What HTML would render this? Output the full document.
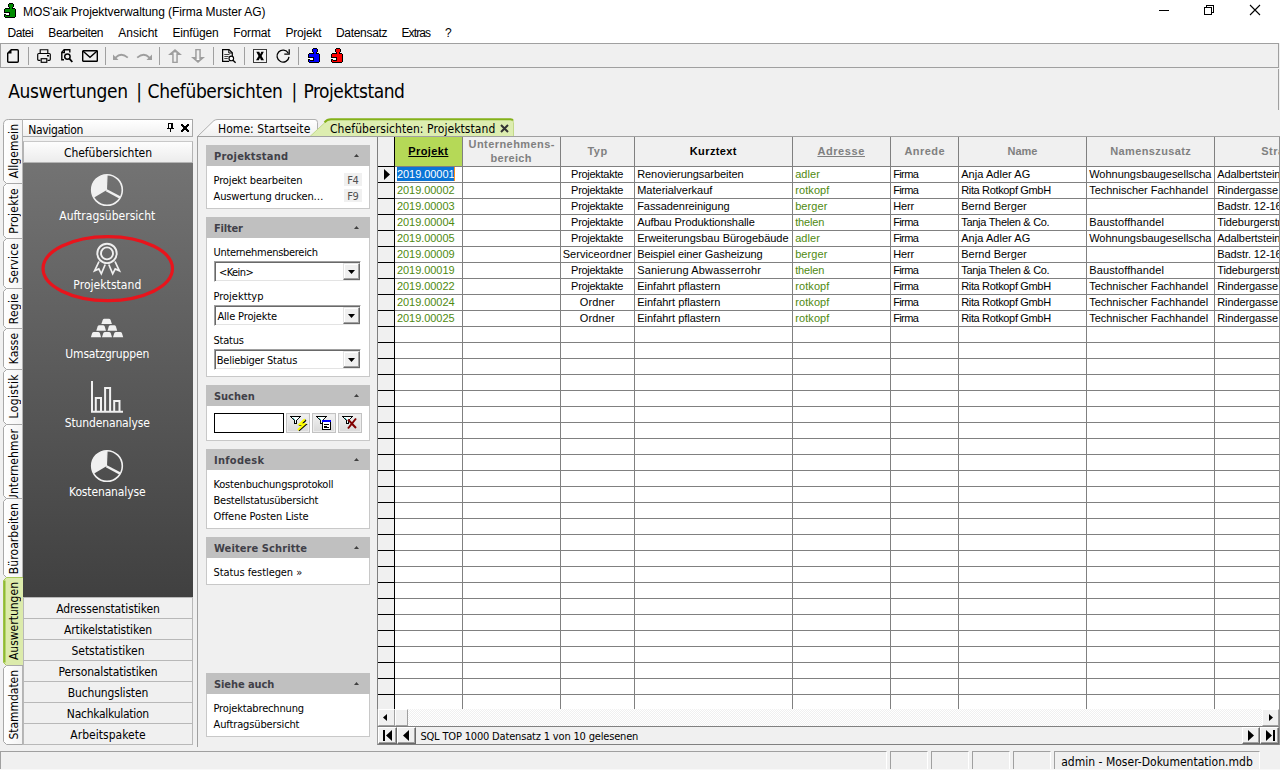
<!DOCTYPE html><html lang="de"><head><meta charset="utf-8"><title>MOS'aik Projektverwaltung</title><style>
*{box-sizing:border-box;margin:0;padding:0}
html,body{width:1280px;height:770px;overflow:hidden;background:#f0f0f0}
body{position:relative;font-family:"DejaVu Sans Condensed","Liberation Sans",sans-serif;font-size:12px;color:#000}
.a{position:absolute;white-space:nowrap}
.t{position:absolute;white-space:nowrap;line-height:14px}
.seg{font-family:"Liberation Sans",sans-serif;font-size:12px}
.ar{font-family:"Liberation Sans",sans-serif;font-size:11px}
.c{text-align:center}
svg{position:absolute;overflow:visible}
.vt{position:absolute;left:3px;width:20px;}
.vt{overflow:hidden}
.vt span{position:absolute;left:3px;top:5px;white-space:nowrap;line-height:14px;font-size:12px;writing-mode:vertical-rl;transform:rotate(180deg)}
.nb{position:absolute;left:23px;width:170px;height:22px;border:1px solid #b4b4b4;border-top-color:#c8c8c8;background:linear-gradient(#fdfdfd,#ececec);text-align:center;line-height:19px;font-size:12px}
.ni{position:absolute;left:23px;width:170px;text-align:center;color:#fff;font-size:12px;line-height:14px}
.ph{position:absolute;left:206px;width:164px;height:21px;background:#c0c0c0;color:#404048;font-weight:bold;font-size:11px;line-height:21px;padding-left:8px;font-family:"DejaVu Sans Condensed","Liberation Sans",sans-serif}
.pb{position:absolute;left:206px;width:164px;background:#fff;border:1px solid #c8c8c8;border-top:none}
.pl{position:absolute;left:213px;font-size:11px;line-height:14px;white-space:nowrap;letter-spacing:-0.2px}
.fk{position:absolute;left:344px;width:18px;height:13px;background:#f0f0f0}
.cb{position:absolute;left:214px;width:147px;height:21px;background:#fff;border:1px solid #a0a0a0;border-right-color:#fff;border-bottom-color:#fff;box-shadow:inset 1px 1px 0 #696969,inset -1px -1px 0 #e3e3e3}
.cb i{position:absolute;left:128px;top:1px;width:17px;height:17px;background:#f0f0f0;border:1px solid #e3e3e3;border-right-color:#696969;border-bottom-color:#696969;box-shadow:inset -1px -1px 0 #a0a0a0,inset 1px 1px 0 #fff}
.cb i svg{left:4px;top:6px}
</style></head><body>
<div class="a" style="left:0px;top:0px;width:1280px;height:43px;background:#fff"></div>
<svg style="left:4px;top:3px" width="13" height="15" viewBox="0 0 13 15" shape-rendering="crispEdges"><path d="M5 0h4v1h-4zM4 1h1v1h-1zM9 1h1v1h-1zM4 2h1v1h-1zM9 2h1v1h-1zM4 3h1v1h-1zM9 3h1v1h-1zM5 4h1v1h-1zM8 4h1v1h-1zM1 5h5v1h-5zM8 5h3v1h-3zM0 6h1v1h-1zM11 6h1v1h-1zM0 7h1v1h-1zM11 7h1v1h-1zM0 8h1v1h-1zM11 8h1v1h-1zM0 9h6v1h-6zM11 9h1v1h-1zM5 10h1v1h-1zM11 10h1v1h-1zM0 11h2v1h-2zM5 11h1v1h-1zM11 11h1v1h-1zM0 12h1v1h-1zM2 12h4v1h-4zM11 12h1v1h-1zM0 13h1v1h-1zM11 13h1v1h-1zM1 14h10v1h-10z" fill="#000"/><path d="M5 1h4v1h-4zM5 2h4v1h-4zM5 3h4v1h-4zM6 4h2v1h-2zM6 5h2v1h-2zM1 6h10v1h-10zM1 7h10v1h-10zM1 8h10v1h-10zM6 9h5v1h-5zM6 10h5v1h-5zM6 11h5v1h-5zM1 12h1v1h-1zM6 12h5v1h-5zM1 13h10v1h-10z" fill="#008c00"/><path d="M0 10h5v1h-5zM2 11h3v1h-3z" fill="#fff"/></svg>
<div class="t seg" style="left:23px;top:5px;font-size:12px;letter-spacing:-0.076px;">MOS'aik Projektverwaltung (Firma Muster AG)</div>
<svg style="left:1150px;top:0" width="130" height="22" viewBox="0 0 130 22"><g stroke="#000" stroke-width="1" fill="none" shape-rendering="crispEdges"><path d="M9 10.5h10"/><path d="M54.500 7.500h7v7h-7z"/><path d="M56.500 7.500v-2h7v7h-2"/></g><path d="M100 5l10 10M110 5l-10 10" stroke="#000" stroke-width="1.1" fill="none"/></svg>
<div class="t seg" style="left:7.5px;top:26px;font-size:12px;letter-spacing:-0.454px;">Datei</div>
<div class="t seg" style="left:48.2px;top:26px;font-size:12px;letter-spacing:-0.305px;">Bearbeiten</div>
<div class="t seg" style="left:118.2px;top:26px;font-size:12px;letter-spacing:0.023px;">Ansicht</div>
<div class="t seg" style="left:172.5px;top:26px;font-size:12px;letter-spacing:-0.168px;">Einfügen</div>
<div class="t seg" style="left:233.2px;top:26px;font-size:12px;letter-spacing:-0.103px;">Format</div>
<div class="t seg" style="left:285.5px;top:26px;font-size:12px;letter-spacing:-0.227px;">Projekt</div>
<div class="t seg" style="left:336px;top:26px;font-size:12px;letter-spacing:-0.316px;">Datensatz</div>
<div class="t seg" style="left:401.5px;top:26px;font-size:12px;letter-spacing:-0.903px;">Extras</div>
<div class="t seg" style="left:445px;top:26px;font-size:12px;letter-spacing:-1.188px;">?</div>
<div class="a" style="left:0px;top:43px;width:1279px;height:25px;border:1px solid #a0a0a0;background:#f0f0f0"></div>
<div class="a" style="left:28px;top:47px;width:1px;height:18px;background:#a0a0a0"></div>
<div class="a" style="left:105px;top:47px;width:1px;height:18px;background:#a0a0a0"></div>
<div class="a" style="left:159px;top:47px;width:1px;height:18px;background:#a0a0a0"></div>
<div class="a" style="left:213px;top:47px;width:1px;height:18px;background:#a0a0a0"></div>
<div class="a" style="left:244px;top:47px;width:1px;height:18px;background:#a0a0a0"></div>
<div class="a" style="left:298px;top:47px;width:1px;height:18px;background:#a0a0a0"></div>
<svg style="left:7px;top:49px" width="12" height="14" viewBox="0 0 12 14" ><path d="M4.200 0.700H10.300Q11.300 0.700 11.300 1.700V12.300Q11.300 13.300 10.300 13.300H1.700Q0.700 13.300 0.700 12.300V4.200Z" stroke="#000" fill="none" stroke-width="1.400" stroke-linejoin="round"/><path d="M4.500 0.700V4.500H0.700Z" fill="#000"/></svg><svg style="left:37px;top:49px" width="14" height="14" viewBox="0 0 14 14" ><path d="M3.200 4.500V0.700H10.800V4.500" stroke="#000" fill="none" stroke-width="1.150"/><path d="M3.500 11.300H1.700Q0.700 11.300 0.700 10.300V5.500Q0.700 4.500 1.700 4.500H12.300Q13.300 4.500 13.300 5.500V10.300Q13.300 11.300 12.300 11.300H10.500" stroke="#000" fill="none" stroke-width="1.150"/><rect x="4.200" y="9.700" width="5.600" height="3.600" stroke="#000" fill="none" stroke-width="1.150"/><rect x="10" y="6" width="2" height="1.500" fill="#000"/></svg><svg style="left:61px;top:49px" width="12" height="14" viewBox="0 0 12 14" ><path d="M8.800 3.500V0.700H3.200L0.800 3.200V10.800H3" stroke="#000" fill="none" stroke-width="1.400"/><path d="M3.400 0.700V3.600H0.800" stroke="#000" fill="none" stroke-width="1.200"/><circle cx="6.400" cy="7.600" r="2.700" stroke="#000" fill="none" stroke-width="1.500"/><path d="M8.400 9.700L11.300 13" stroke="#000" fill="none" stroke-width="1.800"/></svg><svg style="left:82px;top:50px" width="16" height="12" viewBox="0 0 16 12" ><rect x="0.700" y="0.700" width="14.600" height="10.600" rx="0.600" stroke="#000" fill="none" stroke-width="1.400"/><path d="M0.900 1L8 7.200L15.100 1" stroke="#000" fill="none" stroke-width="1.400"/></svg><svg style="left:113px;top:52px" width="16" height="9" viewBox="0 0 16 9" ><path d="M0 2.500V8H5.500L3.600 6.100Q8.500 1.300 14.200 6.300L15.400 5.100Q8 -1.500 2.200 4.700Z" fill="#9e9e9e"/></svg><svg style="left:136px;top:52px" width="16" height="9" viewBox="0 0 16 9" ><path d="M16 2.500V8H10.500L12.400 6.100Q7.500 1.300 1.800 6.300L0.600 5.100Q8 -1.500 13.800 4.700Z" fill="#9e9e9e"/></svg><svg style="left:168px;top:49px" width="14" height="14" viewBox="0 0 14 14" ><path d="M7 0L14 6H9.800V14H4.200V6H0Z" fill="#9e9e9e"/><rect x="5.700" y="4" width="2.600" height="8.700" fill="#f0f0f0"/><path d="M5.700 4H8.300" stroke="#fff" stroke-width="1"/></svg><svg style="left:191px;top:49px" width="14" height="14" viewBox="0 0 14 14" ><path d="M7 14L14 8H9.800V0H4.200V8H0Z" fill="#9e9e9e"/><rect x="5.700" y="1.300" width="2.600" height="9" fill="#f0f0f0"/><path d="M5.700 10.500H8.300" stroke="#fff" stroke-width="1"/></svg><svg style="left:222px;top:49px" width="14" height="14" viewBox="0 0 14 14" ><path d="M7.200 12.300H0.600V0.600H7L10.300 3.800V7" stroke="#000" fill="none" stroke-width="1.200"/><path d="M6.800 0.800V4H10" stroke="#000" fill="none" stroke-width="1"/><path d="M2.300 5.500H7.500M2.300 7.500H6.500M2.300 9.500H5.800" stroke="#444" stroke-width="1" fill="none"/><circle cx="9.300" cy="9.400" r="2.300" fill="#fff" stroke="#000" stroke-width="1.100"/><path d="M11 11.200L13.600 13.800" stroke="#000" fill="none" stroke-width="1.300"/></svg><svg style="left:253px;top:49px" width="14" height="14" viewBox="0 0 14 14" ><rect x="0.500" y="0.500" width="13" height="13" fill="#f4f4f4" stroke="#3c3c3c" stroke-width="1"/><path d="M3.300 2.800H6.300L7.200 5.300L8.300 2.800H10.800L8.600 7L11 11.300H8L7 8.800L5.800 11.300H3L5.500 7Z" fill="#000"/></svg><svg style="left:276px;top:49px" width="15" height="14" viewBox="0 0 15 14" ><path d="M12.300 4.200A6 6 0 1 0 13 7.800" stroke="#000" fill="none" stroke-width="1.300"/><path d="M13.200 0.300V5.200H8.300" stroke="#000" fill="none" stroke-width="1.300"/></svg>
<svg style="left:308px;top:48px" width="13" height="15" viewBox="0 0 13 15" shape-rendering="crispEdges"><path d="M5 0h4v1h-4zM4 1h1v1h-1zM9 1h1v1h-1zM4 2h1v1h-1zM9 2h1v1h-1zM4 3h1v1h-1zM9 3h1v1h-1zM5 4h1v1h-1zM8 4h1v1h-1zM1 5h5v1h-5zM8 5h3v1h-3zM0 6h1v1h-1zM11 6h1v1h-1zM0 7h1v1h-1zM11 7h1v1h-1zM0 8h1v1h-1zM11 8h1v1h-1zM0 9h6v1h-6zM11 9h1v1h-1zM5 10h1v1h-1zM11 10h1v1h-1zM0 11h2v1h-2zM5 11h1v1h-1zM11 11h1v1h-1zM0 12h1v1h-1zM2 12h4v1h-4zM11 12h1v1h-1zM0 13h1v1h-1zM11 13h1v1h-1zM1 14h10v1h-10z" fill="#000"/><path d="M5 1h4v1h-4zM5 2h4v1h-4zM5 3h4v1h-4zM6 4h2v1h-2zM6 5h2v1h-2zM1 6h10v1h-10zM1 7h10v1h-10zM1 8h10v1h-10zM6 9h5v1h-5zM6 10h5v1h-5zM6 11h5v1h-5zM1 12h1v1h-1zM6 12h5v1h-5zM1 13h10v1h-10z" fill="#0000ff"/><path d="M0 10h5v1h-5zM2 11h3v1h-3z" fill="#fff"/></svg>
<svg style="left:331px;top:48px" width="13" height="15" viewBox="0 0 13 15" shape-rendering="crispEdges"><path d="M5 0h4v1h-4zM4 1h1v1h-1zM9 1h1v1h-1zM4 2h1v1h-1zM9 2h1v1h-1zM4 3h1v1h-1zM9 3h1v1h-1zM5 4h1v1h-1zM8 4h1v1h-1zM1 5h5v1h-5zM8 5h3v1h-3zM0 6h1v1h-1zM11 6h1v1h-1zM0 7h1v1h-1zM11 7h1v1h-1zM0 8h1v1h-1zM11 8h1v1h-1zM0 9h6v1h-6zM11 9h1v1h-1zM5 10h1v1h-1zM11 10h1v1h-1zM0 11h2v1h-2zM5 11h1v1h-1zM11 11h1v1h-1zM0 12h1v1h-1zM2 12h4v1h-4zM11 12h1v1h-1zM0 13h1v1h-1zM11 13h1v1h-1zM1 14h10v1h-10z" fill="#000"/><path d="M5 1h4v1h-4zM5 2h4v1h-4zM5 3h4v1h-4zM6 4h2v1h-2zM6 5h2v1h-2zM1 6h10v1h-10zM1 7h10v1h-10zM1 8h10v1h-10zM6 9h5v1h-5zM6 10h5v1h-5zM6 11h5v1h-5zM1 12h1v1h-1zM6 12h5v1h-5zM1 13h10v1h-10z" fill="#ff0000"/><path d="M0 10h5v1h-5zM2 11h3v1h-3z" fill="#fff"/></svg>
<div class="t" style="left:8.2px;top:80px;font-size:19px;letter-spacing:-0.341px;line-height:22px">Auswertungen</div>
<div class="t" style="left:136.3px;top:80px;font-size:19px;letter-spacing:-1.766px;line-height:22px">|</div>
<div class="t" style="left:147.6px;top:80px;font-size:19px;letter-spacing:-0.371px;line-height:22px">Chefübersichten</div>
<div class="t" style="left:291.5px;top:80px;font-size:19px;letter-spacing:-1.766px;line-height:22px">|</div>
<div class="t" style="left:303.5px;top:80px;font-size:19px;letter-spacing:-0.479px;line-height:22px">Projektstand</div>
<div class="a" style="left:1278px;top:69px;width:1px;height:41px;background:#a0a0a0"></div>
<svg style="left:0;top:0" width="24" height="750" viewBox="0 0 24 750"><defs><linearGradient id="vg" x1="0" y1="0" x2="1" y2="0"><stop offset="0" stop-color="#ffffff"/><stop offset="1" stop-color="#f3f3f3"/></linearGradient></defs><path d="M23 119.5L8.500 119.5Q3.500 119.5 3.500 124.5L3.500 180.5L6.500 183.5L23 183.5" fill="url(#vg)" stroke="#a8a8a8" stroke-width="1"/><path d="M23 183.5L6.500 183.5L3.500 186.5L3.500 235.5L6.500 238.5L23 238.5" fill="url(#vg)" stroke="#a8a8a8" stroke-width="1"/><path d="M23 238.5L6.500 238.5L3.500 241.5L3.500 285.5L6.500 288.5L23 288.5" fill="url(#vg)" stroke="#a8a8a8" stroke-width="1"/><path d="M23 288.5L6.500 288.5L3.500 291.5L3.500 325.5L6.500 328.5L23 328.5" fill="url(#vg)" stroke="#a8a8a8" stroke-width="1"/><path d="M23 328.5L6.500 328.5L3.500 331.5L3.500 366.5L6.500 369.5L23 369.5" fill="url(#vg)" stroke="#a8a8a8" stroke-width="1"/><path d="M23 369.5L6.500 369.5L3.500 372.5L3.500 421.5L6.500 424.5L23 424.5" fill="url(#vg)" stroke="#a8a8a8" stroke-width="1"/><path d="M23 424.5L6.500 424.5L3.500 427.5L3.500 495.5L6.500 498.5L23 498.5" fill="url(#vg)" stroke="#a8a8a8" stroke-width="1"/><path d="M23 498.5L6.500 498.5L3.500 501.5L3.500 574.5L6.500 577.5L23 577.5" fill="url(#vg)" stroke="#a8a8a8" stroke-width="1"/><path d="M23 577.5L6.500 577.5L3.500 580.5L3.500 662.5L6.500 665.5L23 665.5" fill="#dcebab" stroke="#a9c95a" stroke-width="1"/><path d="M4.500 580.5L4.500 662.5" stroke="#8fbb32" stroke-width="2" fill="none"/><path d="M23 665.5L6.500 665.5L3.500 668.5L3.500 741.5L6.500 744.5L23 744.5" fill="url(#vg)" stroke="#a8a8a8" stroke-width="1"/></svg>
<div class="vt" style="top:119px;height:64px;"><span style="letter-spacing:0.026px;left:4px">Allgemein</span></div>
<div class="vt" style="top:183px;height:55px;"><span style="letter-spacing:0.234px;left:4px">Projekte</span></div>
<div class="vt" style="top:238px;height:50px;"><span style="letter-spacing:0.099px;left:4px">Service</span></div>
<div class="vt" style="top:288px;height:40px;"><span style="letter-spacing:0.223px;left:4px">Regie</span></div>
<div class="vt" style="top:328px;height:41px;"><span style="letter-spacing:-0.048px;left:4px">Kasse</span></div>
<div class="vt" style="top:369px;height:55px;"><span style="letter-spacing:0.389px;left:4px">Logistik</span></div>
<div class="vt" style="top:424px;height:74px;"><span style="letter-spacing:0.122px;left:4px">Unternehmer</span></div>
<div class="vt" style="top:498px;height:79px;"><span style="letter-spacing:0.073px;left:4px">Büroarbeiten</span></div>
<div class="vt" style="top:577px;height:88px;"><span style="letter-spacing:0.006px;left:4px">Auswertungen</span></div>
<div class="vt" style="top:665px;height:79px;"><span style="letter-spacing:-0.049px;left:4px">Stammdaten</span></div>
<div class="a" style="left:22px;top:119px;width:171px;height:18px;border:1px solid #a8a8a8;background:linear-gradient(#fff,#f0f0f0)"></div>
<div class="t" style="left:28.3px;top:123px;font-size:12px;letter-spacing:-0.359px;">Navigation</div>
<svg style="left:167px;top:123px" width="7" height="9" viewBox="0 0 7 9" shape-rendering="crispEdges"><path d="M1 0h5v1h-5zM1 1h1v1h-1zM4 1h2v1h-2zM1 2h1v1h-1zM4 2h2v1h-2zM1 3h1v1h-1zM4 3h2v1h-2zM1 4h1v1h-1zM4 4h2v1h-2zM0 5h7v1h-7zM3 6h1v1h-1zM3 7h1v1h-1zM3 8h1v1h-1z" fill="#000"/></svg>
<svg style="left:181px;top:124px" width="8" height="8" viewBox="0 0 8 8" shape-rendering="crispEdges"><path d="M0 0h2v1h-2zM6 0h2v1h-2zM0 1h3v1h-3zM5 1h3v1h-3zM1 2h6v1h-6zM2 3h4v1h-4zM2 4h4v1h-4zM1 5h6v1h-6zM0 6h3v1h-3zM5 6h3v1h-3zM0 7h2v1h-2zM6 7h2v1h-2z" fill="#000"/></svg>
<div class="nb" style="top:141px;"></div>
<div class="t" style="left:64px;top:146px;font-size:12px;letter-spacing:-0.052px;">Chefübersichten</div>
<div class="a" style="left:23px;top:163px;width:170px;height:435px;background:linear-gradient(#737373,#404040)"></div>
<div class="t" style="left:59.3px;top:209px;font-size:12px;letter-spacing:0.0px;color:#fff">Auftragsübersicht</div>
<div class="t" style="left:73.3px;top:278px;font-size:12px;letter-spacing:0.057px;color:#fff">Projektstand</div>
<div class="t" style="left:65.3px;top:347px;font-size:12px;letter-spacing:-0.159px;color:#fff">Umsatzgruppen</div>
<div class="t" style="left:64.8px;top:416px;font-size:12px;letter-spacing:-0.143px;color:#fff">Stundenanalyse</div>
<div class="t" style="left:69.05px;top:485px;font-size:12px;letter-spacing:-0.139px;color:#fff">Kostenanalyse</div>
<svg style="left:0;top:0" width="200" height="600" viewBox="0 0 200 600"><circle cx="107" cy="190" r="15.3" fill="none" stroke="#f0f0f0" stroke-width="1.600"/><path d="M106.40 190.20L107.00 174.70A15.3 15.3 0 0 0 93.75 197.65Z" fill="#f0f0f0"/><path d="M106.40 190.20L120.25 197.65" stroke="#f0f0f0" stroke-width="2.400" fill="none"/><path d="M106.40 190.20L107.00 174.70" stroke="#f0f0f0" stroke-width="1.200" fill="none"/><circle cx="107" cy="466" r="15.3" fill="none" stroke="#f0f0f0" stroke-width="1.600"/><path d="M106.40 466.20L107.00 450.70A15.3 15.3 0 0 0 93.75 473.65Z" fill="#f0f0f0"/><path d="M106.40 466.20L120.25 473.65" stroke="#f0f0f0" stroke-width="2.400" fill="none"/><path d="M106.40 466.20L107.00 450.70" stroke="#f0f0f0" stroke-width="1.200" fill="none"/><circle cx="107" cy="253.400" r="9.700" fill="none" stroke="#f0f0f0" stroke-width="1.900"/><circle cx="107" cy="253.400" r="6" fill="none" stroke="#f0f0f0" stroke-width="1.900"/><path d="M99 261.500L94.600 270.800L98.800 268.900L101.300 273.800L105.200 264.500" fill="none" stroke="#f0f0f0" stroke-width="1.700"/><path d="M115 261.500L119.400 270.800L115.200 268.900L112.700 273.800L108.800 264.500" fill="none" stroke="#f0f0f0" stroke-width="1.700"/><path d="M101.4 324.1L102.7 319.9Q103.2 318.7 104.4 318.7H108.9Q110.10000000000001 318.7 110.60000000000001 319.9L111.9 324.1Z" fill="#f0f0f0"/><path d="M96.3 330.7L97.6 326.4Q98.1 325.2 99.3 325.2H103Q104.2 325.2 104.7 326.4L106 330.7Z" fill="#f0f0f0"/><path d="M107.5 330.7L108.8 326.4Q109.3 325.2 110.5 325.2H114.2Q115.4 325.2 115.9 326.4L117.2 330.7Z" fill="#f0f0f0"/><path d="M90.9 337.2L92.2 333.09999999999997Q92.7 331.9 93.9 331.9H98.1Q99.3 331.9 99.8 333.09999999999997L101.1 337.2Z" fill="#f0f0f0"/><path d="M102 337.2L103.3 333.09999999999997Q103.8 331.9 105 331.9H109Q110.2 331.9 110.7 333.09999999999997L112 337.2Z" fill="#f0f0f0"/><path d="M113 337.2L114.3 333.09999999999997Q114.8 331.9 116 331.9H120.2Q121.4 331.9 121.9 333.09999999999997L123.2 337.2Z" fill="#f0f0f0"/><path d="M91 381h2v29.700h30v2.100h-32z" fill="#f0f0f0"/><path d="M95.8 411V398H101V411" fill="none" stroke="#f0f0f0" stroke-width="2"/><path d="M105.1 411V388H110.1V411" fill="none" stroke="#f0f0f0" stroke-width="2"/><path d="M114.2 411V401H119.5V411" fill="none" stroke="#f0f0f0" stroke-width="2"/></svg>
<svg style="left:0;top:0" width="200" height="320" viewBox="0 0 200 320"><ellipse cx="107.750" cy="268.600" rx="64.700" ry="32" fill="none" stroke="#e8141c" stroke-width="3.200"/></svg>
<div class="a" style="left:22px;top:119px;width:1px;height:458px;background:#b4b4b4"></div>
<div class="a" style="left:22px;top:666px;width:1px;height:79px;background:#b4b4b4"></div>
<div class="nb" style="top:597px;background:#f0f0f0;border-color:#b8b8b8;"></div>
<div class="t" style="left:56.2px;top:602px;font-size:12px;letter-spacing:-0.103px;">Adressenstatistiken</div>
<div class="nb" style="top:618px;background:#f0f0f0;border-color:#b8b8b8;"></div>
<div class="t" style="left:64px;top:623px;font-size:12px;letter-spacing:-0.141px;">Artikelstatistiken</div>
<div class="nb" style="top:639px;background:#f0f0f0;border-color:#b8b8b8;"></div>
<div class="t" style="left:71.5px;top:644px;font-size:12px;letter-spacing:-0.047px;">Setstatistiken</div>
<div class="nb" style="top:660px;background:#f0f0f0;border-color:#b8b8b8;"></div>
<div class="t" style="left:58.5px;top:665px;font-size:12px;letter-spacing:-0.151px;">Personalstatistiken</div>
<div class="nb" style="top:681px;background:#f0f0f0;border-color:#b8b8b8;"></div>
<div class="t" style="left:67.75px;top:686px;font-size:12px;letter-spacing:-0.157px;">Buchungslisten</div>
<div class="nb" style="top:702px;background:#f0f0f0;border-color:#b8b8b8;"></div>
<div class="t" style="left:66.85px;top:707px;font-size:12px;letter-spacing:-0.275px;">Nachkalkulation</div>
<div class="nb" style="top:723px;background:#f0f0f0;border-color:#b8b8b8;"></div>
<div class="t" style="left:70.35px;top:728px;font-size:12px;letter-spacing:0.025px;">Arbeitspakete</div>
<svg style="left:196px;top:118px" width="330" height="20" viewBox="0 0 330 20">
<defs><linearGradient id="tg" x1="0" y1="0" x2="0" y2="1"><stop offset="0" stop-color="#ffffff"/><stop offset="1" stop-color="#f0f0f0"/></linearGradient></defs>
<path d="M1.500 18.500 L18 2.500 Q19.500 1.500 22 1.500 L119 1.500 Q121.500 1.500 121.500 4.500 L121.500 18.500 Z" fill="url(#tg)" stroke="#b0b0b0" stroke-width="1"/>
<path d="M114 18.500 L130 3.500 Q132 1.500 135 1.500 L314 1.500 Q317.500 1.500 317.500 4.500 L317.500 18.500 Z" fill="#ddedb0" stroke="#c3d98a" stroke-width="1"/>
<path d="M128.500 4.300 Q131 1.200 135 1.200 L314.500 1.200 Q316.500 1.200 317 2.500" fill="none" stroke="#84b11a" stroke-width="2"/>
</svg>
<svg style="left:500px;top:124px" width="9" height="9" viewBox="0 0 9 9"><path d="M1 1L8 8M8 1L1 8" stroke="#333" stroke-width="2" fill="none"/></svg>
<div class="t" style="left:218px;top:122px;font-size:12px;letter-spacing:0.055px;">Home: Startseite</div>
<div class="t" style="left:330px;top:122px;font-size:12px;letter-spacing:0.076px;">Chefübersichten: Projektstand</div>
<div class="a" style="left:197px;top:136px;width:1083px;height:1px;background:#a0a0a0"></div>
<div class="a" style="left:197px;top:136px;width:1px;height:611px;background:#a0a0a0"></div>
<div class="ph" style="top:145px;height:21px"><svg style="left:148px;top:9px" width="5" height="3" viewBox="0 0 5 3"><path d="M0 3L2.500 0L5 3z" fill="#404040"/></svg></div>
<div class="t" style="left:214px;top:150px;font-size:11px;letter-spacing:0.202px;font-weight:bold;color:#404048">Projektstand</div>
<div class="pb" style="top:166px;height:43px"></div>
<div class="t" style="left:213.5px;top:174px;font-size:11px;letter-spacing:-0.125px;">Projekt bearbeiten</div>
<div class="fk" style="top:173px"></div>
<div class="t" style="left:347.25px;top:174px;font-size:11px;letter-spacing:-0.5px;color:#505050">F4</div>
<div class="t" style="left:213.5px;top:190px;font-size:11px;letter-spacing:-0.109px;">Auswertung drucken…</div>
<div class="fk" style="top:189px"></div>
<div class="t" style="left:347.25px;top:190px;font-size:11px;letter-spacing:-0.5px;color:#505050">F9</div>
<div class="ph" style="top:217px;height:21px"><svg style="left:148px;top:9px" width="5" height="3" viewBox="0 0 5 3"><path d="M0 3L2.500 0L5 3z" fill="#404040"/></svg></div>
<div class="t" style="left:214px;top:222px;font-size:11px;letter-spacing:-0.175px;font-weight:bold;color:#404048">Filter</div>
<div class="pb" style="top:238px;height:139px"></div>
<div class="t" style="left:213.5px;top:246px;font-size:11px;letter-spacing:-0.301px;">Unternehmensbereich</div>
<div class="cb" style="top:261px"><i><svg width="7" height="4" viewBox="0 0 7 4"><path d="M0 0H7L3.500 4Z" fill="#000"/></svg></i></div>
<div class="t" style="left:219px;top:266px;font-size:11px;letter-spacing:-0.588px;">&lt;Kein&gt;</div>
<div class="t" style="left:213.5px;top:290px;font-size:11px;letter-spacing:-0.014px;">Projekttyp</div>
<div class="cb" style="top:305px"><i><svg width="7" height="4" viewBox="0 0 7 4"><path d="M0 0H7L3.500 4Z" fill="#000"/></svg></i></div>
<div class="t" style="left:217.4px;top:310px;font-size:11px;letter-spacing:-0.159px;">Alle Projekte</div>
<div class="t" style="left:213.5px;top:334px;font-size:11px;letter-spacing:-0.209px;">Status</div>
<div class="cb" style="top:349px"><i><svg width="7" height="4" viewBox="0 0 7 4"><path d="M0 0H7L3.500 4Z" fill="#000"/></svg></i></div>
<div class="t" style="left:216.8px;top:354px;font-size:11px;letter-spacing:-0.258px;">Beliebiger Status</div>
<div class="ph" style="top:385px;height:21px"><svg style="left:148px;top:9px" width="5" height="3" viewBox="0 0 5 3"><path d="M0 3L2.500 0L5 3z" fill="#404040"/></svg></div>
<div class="t" style="left:214px;top:390px;font-size:11px;letter-spacing:-0.032px;font-weight:bold;color:#404048">Suchen</div>
<div class="pb" style="top:406px;height:35px"></div>
<div class="a" style="left:214px;top:413px;width:70px;height:20px;background:#fff;border:1px solid #000"></div>
<div class="a" style="left:286px;top:413px;width:24px;height:20px;background:linear-gradient(#f2f2f2,#d9d9d9);border:1px solid #c2c2c2;box-shadow:inset 0 0 0 1px #ececec"></div>
<div class="a" style="left:312px;top:413px;width:24px;height:20px;background:linear-gradient(#f2f2f2,#d9d9d9);border:1px solid #c2c2c2;box-shadow:inset 0 0 0 1px #ececec"></div>
<div class="a" style="left:338px;top:413px;width:24px;height:20px;background:linear-gradient(#f2f2f2,#d9d9d9);border:1px solid #c2c2c2;box-shadow:inset 0 0 0 1px #ececec"></div>
<svg style="left:290px;top:416px" width="11" height="8" viewBox="0 0 11 8" ><path d="M0.500 0.500H10.500L6.500 4.500V7.500H4.500V4.500Z" fill="#e8ffff" stroke="#000" stroke-width="1" shape-rendering="crispEdges"/><path d="M2 1.500H9L6 4.300H5Z" fill="#fff"/><path d="M3 2L5 4" stroke="#20b0b0" stroke-width="0.800"/></svg><svg style="left:316px;top:416px" width="11" height="8" viewBox="0 0 11 8" ><path d="M0.500 0.500H10.500L6.500 4.500V7.500H4.500V4.500Z" fill="#e8ffff" stroke="#000" stroke-width="1" shape-rendering="crispEdges"/><path d="M2 1.500H9L6 4.300H5Z" fill="#fff"/><path d="M3 2L5 4" stroke="#20b0b0" stroke-width="0.800"/></svg><svg style="left:342px;top:416px" width="11" height="8" viewBox="0 0 11 8" ><path d="M0.500 0.500H10.500L6.500 4.500V7.500H4.500V4.500Z" fill="#e8ffff" stroke="#000" stroke-width="1" shape-rendering="crispEdges"/><path d="M2 1.500H9L6 4.300H5Z" fill="#fff"/><path d="M3 2L5 4" stroke="#20b0b0" stroke-width="0.800"/></svg><svg style="left:297px;top:419px" width="10" height="12" viewBox="0 0 10 12" ><path d="M8.800 1L3.800 5.800H8.300L1.800 11.500" stroke="#000" stroke-width="1.800" fill="none" stroke-linejoin="miter"/><path d="M7.800 0.300L2.600 5.200H7.400L0.900 11" stroke="#ffff00" stroke-width="1.900" fill="none" stroke-linejoin="miter"/></svg><svg style="left:322px;top:420px" width="9" height="10" viewBox="0 0 9 10" ><rect x="0.500" y="0.500" width="8" height="9" fill="#fff" stroke="#000" stroke-width="1" shape-rendering="crispEdges"/><rect x="0" y="0" width="9" height="2" fill="#0000ff" shape-rendering="crispEdges"/><path d="M2 4.500H7M2 6.500H5M2 7.500H7" stroke="#000" stroke-width="1" shape-rendering="crispEdges"/></svg><svg style="left:347px;top:418px" width="10" height="11" viewBox="0 0 10 11" ><path d="M1 1.500L9 10M9 0.500L1 10.500" stroke="#800000" stroke-width="2" fill="none"/></svg>
<div class="ph" style="top:449px;height:21px"><svg style="left:148px;top:9px" width="5" height="3" viewBox="0 0 5 3"><path d="M0 3L2.500 0L5 3z" fill="#404040"/></svg></div>
<div class="t" style="left:214px;top:454px;font-size:11px;letter-spacing:0.27px;font-weight:bold;color:#404048">Infodesk</div>
<div class="pb" style="top:470px;height:59px"></div>
<div class="t" style="left:213.5px;top:478px;font-size:11px;letter-spacing:-0.211px;">Kostenbuchungsprotokoll</div>
<div class="t" style="left:213.5px;top:494px;font-size:11px;letter-spacing:-0.244px;">Bestellstatusübersicht</div>
<div class="t" style="left:213.5px;top:510px;font-size:11px;letter-spacing:-0.043px;">Offene Posten Liste</div>
<div class="ph" style="top:537px;height:21px"><svg style="left:148px;top:9px" width="5" height="3" viewBox="0 0 5 3"><path d="M0 3L2.500 0L5 3z" fill="#404040"/></svg></div>
<div class="t" style="left:214px;top:542px;font-size:11px;letter-spacing:0.093px;font-weight:bold;color:#404048">Weitere Schritte</div>
<div class="pb" style="top:558px;height:27px"></div>
<div class="t" style="left:213.5px;top:566px;font-size:11px;letter-spacing:-0.075px;">Status festlegen »</div>
<div class="ph" style="top:673px;height:21px"><svg style="left:148px;top:9px" width="5" height="3" viewBox="0 0 5 3"><path d="M0 3L2.500 0L5 3z" fill="#404040"/></svg></div>
<div class="t" style="left:214px;top:678px;font-size:11px;letter-spacing:-0.075px;font-weight:bold;color:#404048">Siehe auch</div>
<div class="pb" style="top:694px;height:43px"></div>
<div class="t" style="left:213.5px;top:702px;font-size:11px;letter-spacing:-0.162px;">Projektabrechnung</div>
<div class="t" style="left:213.5px;top:718px;font-size:11px;letter-spacing:-0.125px;">Auftragsübersicht</div>
<div class="a" style="left:377px;top:137px;width:903px;height:572px;background:#fff"></div>
<div class="a" style="left:377px;top:137px;width:903px;height:29px;background:#f0f0f0"></div>
<div class="a" style="left:395px;top:137px;width:67px;height:29px;background:#b5d957"></div>
<div class="a" style="left:377px;top:137px;width:17px;height:572px;background:#f0f0f0;border-left:1px solid #808080"></div>
<div class="a" style="left:395px;top:166px;width:885px;height:1px;background:#808080"></div><div class="a" style="left:378px;top:166px;width:16px;height:1px;background:#000"></div><div class="a" style="left:395px;top:182px;width:885px;height:1px;background:#808080"></div><div class="a" style="left:378px;top:182px;width:16px;height:1px;background:#000"></div><div class="a" style="left:395px;top:198px;width:885px;height:1px;background:#808080"></div><div class="a" style="left:378px;top:198px;width:16px;height:1px;background:#000"></div><div class="a" style="left:395px;top:214px;width:885px;height:1px;background:#808080"></div><div class="a" style="left:378px;top:214px;width:16px;height:1px;background:#000"></div><div class="a" style="left:395px;top:230px;width:885px;height:1px;background:#808080"></div><div class="a" style="left:378px;top:230px;width:16px;height:1px;background:#000"></div><div class="a" style="left:395px;top:246px;width:885px;height:1px;background:#808080"></div><div class="a" style="left:378px;top:246px;width:16px;height:1px;background:#000"></div><div class="a" style="left:395px;top:262px;width:885px;height:1px;background:#808080"></div><div class="a" style="left:378px;top:262px;width:16px;height:1px;background:#000"></div><div class="a" style="left:395px;top:278px;width:885px;height:1px;background:#808080"></div><div class="a" style="left:378px;top:278px;width:16px;height:1px;background:#000"></div><div class="a" style="left:395px;top:294px;width:885px;height:1px;background:#808080"></div><div class="a" style="left:378px;top:294px;width:16px;height:1px;background:#000"></div><div class="a" style="left:395px;top:310px;width:885px;height:1px;background:#808080"></div><div class="a" style="left:378px;top:310px;width:16px;height:1px;background:#000"></div><div class="a" style="left:395px;top:326px;width:885px;height:1px;background:#808080"></div><div class="a" style="left:378px;top:326px;width:16px;height:1px;background:#000"></div><div class="a" style="left:395px;top:342px;width:885px;height:1px;background:#808080"></div><div class="a" style="left:378px;top:342px;width:16px;height:1px;background:#000"></div><div class="a" style="left:395px;top:358px;width:885px;height:1px;background:#808080"></div><div class="a" style="left:378px;top:358px;width:16px;height:1px;background:#000"></div><div class="a" style="left:395px;top:374px;width:885px;height:1px;background:#808080"></div><div class="a" style="left:378px;top:374px;width:16px;height:1px;background:#000"></div><div class="a" style="left:395px;top:390px;width:885px;height:1px;background:#808080"></div><div class="a" style="left:378px;top:390px;width:16px;height:1px;background:#000"></div><div class="a" style="left:395px;top:406px;width:885px;height:1px;background:#808080"></div><div class="a" style="left:378px;top:406px;width:16px;height:1px;background:#000"></div><div class="a" style="left:395px;top:422px;width:885px;height:1px;background:#808080"></div><div class="a" style="left:378px;top:422px;width:16px;height:1px;background:#000"></div><div class="a" style="left:395px;top:438px;width:885px;height:1px;background:#808080"></div><div class="a" style="left:378px;top:438px;width:16px;height:1px;background:#000"></div><div class="a" style="left:395px;top:454px;width:885px;height:1px;background:#808080"></div><div class="a" style="left:378px;top:454px;width:16px;height:1px;background:#000"></div><div class="a" style="left:395px;top:470px;width:885px;height:1px;background:#808080"></div><div class="a" style="left:378px;top:470px;width:16px;height:1px;background:#000"></div><div class="a" style="left:395px;top:486px;width:885px;height:1px;background:#808080"></div><div class="a" style="left:378px;top:486px;width:16px;height:1px;background:#000"></div><div class="a" style="left:395px;top:502px;width:885px;height:1px;background:#808080"></div><div class="a" style="left:378px;top:502px;width:16px;height:1px;background:#000"></div><div class="a" style="left:395px;top:518px;width:885px;height:1px;background:#808080"></div><div class="a" style="left:378px;top:518px;width:16px;height:1px;background:#000"></div><div class="a" style="left:395px;top:534px;width:885px;height:1px;background:#808080"></div><div class="a" style="left:378px;top:534px;width:16px;height:1px;background:#000"></div><div class="a" style="left:395px;top:550px;width:885px;height:1px;background:#808080"></div><div class="a" style="left:378px;top:550px;width:16px;height:1px;background:#000"></div><div class="a" style="left:395px;top:566px;width:885px;height:1px;background:#808080"></div><div class="a" style="left:378px;top:566px;width:16px;height:1px;background:#000"></div><div class="a" style="left:395px;top:582px;width:885px;height:1px;background:#808080"></div><div class="a" style="left:378px;top:582px;width:16px;height:1px;background:#000"></div><div class="a" style="left:395px;top:598px;width:885px;height:1px;background:#808080"></div><div class="a" style="left:378px;top:598px;width:16px;height:1px;background:#000"></div><div class="a" style="left:395px;top:614px;width:885px;height:1px;background:#808080"></div><div class="a" style="left:378px;top:614px;width:16px;height:1px;background:#000"></div><div class="a" style="left:395px;top:630px;width:885px;height:1px;background:#808080"></div><div class="a" style="left:378px;top:630px;width:16px;height:1px;background:#000"></div><div class="a" style="left:395px;top:646px;width:885px;height:1px;background:#808080"></div><div class="a" style="left:378px;top:646px;width:16px;height:1px;background:#000"></div><div class="a" style="left:395px;top:662px;width:885px;height:1px;background:#808080"></div><div class="a" style="left:378px;top:662px;width:16px;height:1px;background:#000"></div><div class="a" style="left:395px;top:678px;width:885px;height:1px;background:#808080"></div><div class="a" style="left:378px;top:678px;width:16px;height:1px;background:#000"></div><div class="a" style="left:395px;top:694px;width:885px;height:1px;background:#808080"></div><div class="a" style="left:378px;top:694px;width:16px;height:1px;background:#000"></div>
<div class="a" style="left:462px;top:137px;width:1px;height:572px;background:#808080"></div>
<div class="a" style="left:560px;top:137px;width:1px;height:572px;background:#808080"></div>
<div class="a" style="left:634px;top:137px;width:1px;height:572px;background:#808080"></div>
<div class="a" style="left:792px;top:137px;width:1px;height:572px;background:#808080"></div>
<div class="a" style="left:890px;top:137px;width:1px;height:572px;background:#808080"></div>
<div class="a" style="left:958px;top:137px;width:1px;height:572px;background:#808080"></div>
<div class="a" style="left:1086px;top:137px;width:1px;height:572px;background:#808080"></div>
<div class="a" style="left:1214px;top:137px;width:1px;height:572px;background:#808080"></div>
<div class="a" style="left:394px;top:137px;width:1px;height:572px;background:#000"></div>
<div class="t ar" style="left:408.3px;top:144px;font-size:11px;letter-spacing:0.401px;font-weight:bold;color:#000;text-decoration:underline;">Projekt</div>
<div class="t ar" style="left:468.5px;top:137px;font-size:11px;letter-spacing:0.443px;font-weight:bold;color:#808080;">Unternehmens-</div>
<div class="t ar" style="left:490.5px;top:151px;font-size:11px;letter-spacing:0.31px;font-weight:bold;color:#808080;">bereich</div>
<div class="t ar" style="left:587.4px;top:144px;font-size:11px;letter-spacing:0.525px;font-weight:bold;color:#808080;">Typ</div>
<div class="t ar" style="left:689.8px;top:144px;font-size:11px;letter-spacing:0.383px;font-weight:bold;color:#000;">Kurztext</div>
<div class="t ar" style="left:817.4px;top:144px;font-size:11px;letter-spacing:0.596px;font-weight:bold;color:#808080;text-decoration:underline;">Adresse</div>
<div class="t ar" style="left:904.4px;top:144px;font-size:11px;letter-spacing:0.479px;font-weight:bold;color:#808080;">Anrede</div>
<div class="t ar" style="left:1007.6px;top:144px;font-size:11px;letter-spacing:-0.056px;font-weight:bold;color:#808080;">Name</div>
<div class="t ar" style="left:1110.3px;top:144px;font-size:11px;letter-spacing:0.371px;font-weight:bold;color:#808080;">Namenszusatz</div>
<div class="t ar" style="left:1261.3px;top:144px;font-size:11px;letter-spacing:0.45px;font-weight:bold;color:#808080;">Straße</div>
<div class="a" style="left:397px;top:167px;width:58px;height:14px;background:#0a74d6"></div>
<div class="a" style="left:454px;top:167px;width:1px;height:14px;background:#ff8c1a"></div>
<div class="t ar" style="left:397px;top:168px;font-size:11px;letter-spacing:-0.058px;line-height:13px;color:#fff;">2019.00001</div>
<div class="t ar" style="left:571.1px;top:168px;font-size:11px;letter-spacing:-0.283px;line-height:13px;color:#000;">Projektakte</div>
<div class="t ar" style="left:637.2px;top:168px;font-size:11px;letter-spacing:-0.065px;line-height:13px;color:#000;">Renovierungsarbeiten</div>
<div class="t ar" style="left:795.2px;top:168px;font-size:11px;letter-spacing:0.058px;line-height:13px;color:#4f8a10;">adler</div>
<div class="t ar" style="left:893.2px;top:168px;font-size:11px;letter-spacing:-0.627px;line-height:13px;color:#000;">Firma</div>
<div class="t ar" style="left:961.2px;top:168px;font-size:11px;letter-spacing:0.05px;line-height:13px;color:#000;">Anja Adler AG</div>
<div class="t ar" style="left:1089.2px;top:168px;font-size:11px;letter-spacing:-0.021px;line-height:13px;color:#000;">Wohnungsbaugesellscha</div>
<div class="t ar" style="left:1217.2px;top:168px;font-size:11px;letter-spacing:-0.083px;line-height:13px;color:#000;max-width:63px;overflow:hidden;">Adalbertsteinweg 13</div>
<div class="t ar" style="left:397px;top:184px;font-size:11px;letter-spacing:-0.058px;line-height:13px;color:#4f8a10;">2019.00002</div>
<div class="t ar" style="left:571.1px;top:184px;font-size:11px;letter-spacing:-0.283px;line-height:13px;color:#000;">Projektakte</div>
<div class="t ar" style="left:637.2px;top:184px;font-size:11px;letter-spacing:-0.0px;line-height:13px;color:#000;">Materialverkauf</div>
<div class="t ar" style="left:795.2px;top:184px;font-size:11px;letter-spacing:0.093px;line-height:13px;color:#4f8a10;">rotkopf</div>
<div class="t ar" style="left:893.2px;top:184px;font-size:11px;letter-spacing:-0.627px;line-height:13px;color:#000;">Firma</div>
<div class="t ar" style="left:961.2px;top:184px;font-size:11px;letter-spacing:-0.342px;line-height:13px;color:#000;">Rita Rotkopf GmbH</div>
<div class="t ar" style="left:1089.2px;top:184px;font-size:11px;letter-spacing:-0.012px;line-height:13px;color:#000;">Technischer Fachhandel</div>
<div class="t ar" style="left:1217.2px;top:184px;font-size:11px;letter-spacing:-0.089px;line-height:13px;color:#000;max-width:63px;overflow:hidden;">Rindergasse 5</div>
<div class="t ar" style="left:397px;top:200px;font-size:11px;letter-spacing:-0.058px;line-height:13px;color:#4f8a10;">2019.00003</div>
<div class="t ar" style="left:571.1px;top:200px;font-size:11px;letter-spacing:-0.283px;line-height:13px;color:#000;">Projektakte</div>
<div class="t ar" style="left:637.2px;top:200px;font-size:11px;letter-spacing:-0.074px;line-height:13px;color:#000;">Fassadenreinigung</div>
<div class="t ar" style="left:795.2px;top:200px;font-size:11px;letter-spacing:0.061px;line-height:13px;color:#4f8a10;">berger</div>
<div class="t ar" style="left:893.2px;top:200px;font-size:11px;letter-spacing:-0.164px;line-height:13px;color:#000;">Herr</div>
<div class="t ar" style="left:961.2px;top:200px;font-size:11px;letter-spacing:0.006px;line-height:13px;color:#000;">Bernd Berger</div>
<div class="t ar" style="left:1217.2px;top:200px;font-size:11px;letter-spacing:-0.082px;line-height:13px;color:#000;max-width:63px;overflow:hidden;">Badstr. 12-16</div>
<div class="t ar" style="left:397px;top:216px;font-size:11px;letter-spacing:-0.058px;line-height:13px;color:#4f8a10;">2019.00004</div>
<div class="t ar" style="left:571.1px;top:216px;font-size:11px;letter-spacing:-0.283px;line-height:13px;color:#000;">Projektakte</div>
<div class="t ar" style="left:637.2px;top:216px;font-size:11px;letter-spacing:-0.075px;line-height:13px;color:#000;">Aufbau Produktionshalle</div>
<div class="t ar" style="left:795.2px;top:216px;font-size:11px;letter-spacing:-0.157px;line-height:13px;color:#4f8a10;">thelen</div>
<div class="t ar" style="left:893.2px;top:216px;font-size:11px;letter-spacing:-0.627px;line-height:13px;color:#000;">Firma</div>
<div class="t ar" style="left:961.2px;top:216px;font-size:11px;letter-spacing:-0.286px;line-height:13px;color:#000;">Tanja Thelen &amp; Co.</div>
<div class="t ar" style="left:1089.2px;top:216px;font-size:11px;letter-spacing:0.123px;line-height:13px;color:#000;">Baustoffhandel</div>
<div class="t ar" style="left:1217.2px;top:216px;font-size:11px;letter-spacing:-0.077px;line-height:13px;color:#000;max-width:63px;overflow:hidden;">Tideburgerstr. 8</div>
<div class="t ar" style="left:397px;top:232px;font-size:11px;letter-spacing:-0.058px;line-height:13px;color:#4f8a10;">2019.00005</div>
<div class="t ar" style="left:571.1px;top:232px;font-size:11px;letter-spacing:-0.283px;line-height:13px;color:#000;">Projektakte</div>
<div class="t ar" style="left:637.2px;top:232px;font-size:11px;letter-spacing:-0.01px;line-height:13px;color:#000;">Erweiterungsbau Bürogebäude</div>
<div class="t ar" style="left:795.2px;top:232px;font-size:11px;letter-spacing:0.058px;line-height:13px;color:#4f8a10;">adler</div>
<div class="t ar" style="left:893.2px;top:232px;font-size:11px;letter-spacing:-0.627px;line-height:13px;color:#000;">Firma</div>
<div class="t ar" style="left:961.2px;top:232px;font-size:11px;letter-spacing:0.05px;line-height:13px;color:#000;">Anja Adler AG</div>
<div class="t ar" style="left:1089.2px;top:232px;font-size:11px;letter-spacing:-0.021px;line-height:13px;color:#000;">Wohnungsbaugesellscha</div>
<div class="t ar" style="left:1217.2px;top:232px;font-size:11px;letter-spacing:-0.083px;line-height:13px;color:#000;max-width:63px;overflow:hidden;">Adalbertsteinweg 13</div>
<div class="t ar" style="left:397px;top:248px;font-size:11px;letter-spacing:-0.058px;line-height:13px;color:#4f8a10;">2019.00009</div>
<div class="t ar" style="left:562.65px;top:248px;font-size:11px;letter-spacing:0.051px;line-height:13px;color:#000;">Serviceordner</div>
<div class="t ar" style="left:637.2px;top:248px;font-size:11px;letter-spacing:-0.096px;line-height:13px;color:#000;">Beispiel einer Gasheizung</div>
<div class="t ar" style="left:795.2px;top:248px;font-size:11px;letter-spacing:0.061px;line-height:13px;color:#4f8a10;">berger</div>
<div class="t ar" style="left:893.2px;top:248px;font-size:11px;letter-spacing:-0.164px;line-height:13px;color:#000;">Herr</div>
<div class="t ar" style="left:961.2px;top:248px;font-size:11px;letter-spacing:0.006px;line-height:13px;color:#000;">Bernd Berger</div>
<div class="t ar" style="left:1217.2px;top:248px;font-size:11px;letter-spacing:-0.082px;line-height:13px;color:#000;max-width:63px;overflow:hidden;">Badstr. 12-16</div>
<div class="t ar" style="left:397px;top:264px;font-size:11px;letter-spacing:-0.058px;line-height:13px;color:#4f8a10;">2019.00019</div>
<div class="t ar" style="left:571.1px;top:264px;font-size:11px;letter-spacing:-0.283px;line-height:13px;color:#000;">Projektakte</div>
<div class="t ar" style="left:637.2px;top:264px;font-size:11px;letter-spacing:0.154px;line-height:13px;color:#000;">Sanierung Abwasserrohr</div>
<div class="t ar" style="left:795.2px;top:264px;font-size:11px;letter-spacing:-0.157px;line-height:13px;color:#4f8a10;">thelen</div>
<div class="t ar" style="left:893.2px;top:264px;font-size:11px;letter-spacing:-0.627px;line-height:13px;color:#000;">Firma</div>
<div class="t ar" style="left:961.2px;top:264px;font-size:11px;letter-spacing:-0.286px;line-height:13px;color:#000;">Tanja Thelen &amp; Co.</div>
<div class="t ar" style="left:1089.2px;top:264px;font-size:11px;letter-spacing:0.123px;line-height:13px;color:#000;">Baustoffhandel</div>
<div class="t ar" style="left:1217.2px;top:264px;font-size:11px;letter-spacing:-0.077px;line-height:13px;color:#000;max-width:63px;overflow:hidden;">Tideburgerstr. 8</div>
<div class="t ar" style="left:397px;top:280px;font-size:11px;letter-spacing:-0.058px;line-height:13px;color:#4f8a10;">2019.00022</div>
<div class="t ar" style="left:571.1px;top:280px;font-size:11px;letter-spacing:-0.283px;line-height:13px;color:#000;">Projektakte</div>
<div class="t ar" style="left:637.2px;top:280px;font-size:11px;letter-spacing:-0.003px;line-height:13px;color:#000;">Einfahrt pflastern</div>
<div class="t ar" style="left:795.2px;top:280px;font-size:11px;letter-spacing:0.093px;line-height:13px;color:#4f8a10;">rotkopf</div>
<div class="t ar" style="left:893.2px;top:280px;font-size:11px;letter-spacing:-0.627px;line-height:13px;color:#000;">Firma</div>
<div class="t ar" style="left:961.2px;top:280px;font-size:11px;letter-spacing:-0.342px;line-height:13px;color:#000;">Rita Rotkopf GmbH</div>
<div class="t ar" style="left:1089.2px;top:280px;font-size:11px;letter-spacing:-0.012px;line-height:13px;color:#000;">Technischer Fachhandel</div>
<div class="t ar" style="left:1217.2px;top:280px;font-size:11px;letter-spacing:-0.089px;line-height:13px;color:#000;max-width:63px;overflow:hidden;">Rindergasse 5</div>
<div class="t ar" style="left:397px;top:296px;font-size:11px;letter-spacing:-0.058px;line-height:13px;color:#4f8a10;">2019.00024</div>
<div class="t ar" style="left:579.75px;top:296px;font-size:11px;letter-spacing:0.13px;line-height:13px;color:#000;">Ordner</div>
<div class="t ar" style="left:637.2px;top:296px;font-size:11px;letter-spacing:-0.003px;line-height:13px;color:#000;">Einfahrt pflastern</div>
<div class="t ar" style="left:795.2px;top:296px;font-size:11px;letter-spacing:0.093px;line-height:13px;color:#4f8a10;">rotkopf</div>
<div class="t ar" style="left:893.2px;top:296px;font-size:11px;letter-spacing:-0.627px;line-height:13px;color:#000;">Firma</div>
<div class="t ar" style="left:961.2px;top:296px;font-size:11px;letter-spacing:-0.342px;line-height:13px;color:#000;">Rita Rotkopf GmbH</div>
<div class="t ar" style="left:1089.2px;top:296px;font-size:11px;letter-spacing:-0.012px;line-height:13px;color:#000;">Technischer Fachhandel</div>
<div class="t ar" style="left:1217.2px;top:296px;font-size:11px;letter-spacing:-0.089px;line-height:13px;color:#000;max-width:63px;overflow:hidden;">Rindergasse 5</div>
<div class="t ar" style="left:397px;top:312px;font-size:11px;letter-spacing:-0.058px;line-height:13px;color:#4f8a10;">2019.00025</div>
<div class="t ar" style="left:579.75px;top:312px;font-size:11px;letter-spacing:0.13px;line-height:13px;color:#000;">Ordner</div>
<div class="t ar" style="left:637.2px;top:312px;font-size:11px;letter-spacing:-0.003px;line-height:13px;color:#000;">Einfahrt pflastern</div>
<div class="t ar" style="left:795.2px;top:312px;font-size:11px;letter-spacing:0.093px;line-height:13px;color:#4f8a10;">rotkopf</div>
<div class="t ar" style="left:893.2px;top:312px;font-size:11px;letter-spacing:-0.627px;line-height:13px;color:#000;">Firma</div>
<div class="t ar" style="left:961.2px;top:312px;font-size:11px;letter-spacing:-0.342px;line-height:13px;color:#000;">Rita Rotkopf GmbH</div>
<div class="t ar" style="left:1089.2px;top:312px;font-size:11px;letter-spacing:-0.012px;line-height:13px;color:#000;">Technischer Fachhandel</div>
<div class="t ar" style="left:1217.2px;top:312px;font-size:11px;letter-spacing:-0.089px;line-height:13px;color:#000;max-width:63px;overflow:hidden;">Rindergasse 5</div>
<svg style="left:384px;top:169px" width="6" height="11" viewBox="0 0 6 11"><path d="M0 0L6 5.5L0 11z" fill="#000"/></svg>
<div class="a" style="left:377px;top:709px;width:903px;height:17px;background:#f8f8f8;background-image:repeating-conic-gradient(#fff 0 25%,#f0f0f0 0 50%);background-size:2px 2px;border-left:1px solid #a0a0a0"></div>
<div class="a" style="left:378px;top:709px;width:17px;height:17px;background:#f0f0f0;border:1px solid #fff;border-right-color:#a0a0a0;border-bottom-color:#a0a0a0"></div>
<div class="a" style="left:395px;top:709px;width:13px;height:17px;background:#f0f0f0;border:1px solid #fff;border-right-color:#a0a0a0;border-bottom-color:#a0a0a0"></div>
<div class="a" style="left:1262px;top:709px;width:17px;height:17px;background:#f0f0f0;border:1px solid #fff;border-right-color:#a0a0a0;border-bottom-color:#a0a0a0"></div>
<svg style="left:383px;top:714px" width="4" height="7" viewBox="0 0 4 7"><path d="M4 0L0 3.500L4 7z" fill="#000"/></svg>
<svg style="left:1269px;top:714px" width="4" height="7" viewBox="0 0 4 7"><path d="M0 0L4 3.500L0 7z" fill="#000"/></svg>
<div class="a" style="left:377px;top:726px;width:903px;height:19px;background:#f0f0f0;border:1px solid #808080;border-right:none;border-left-color:#a0a0a0"></div>
<div class="a" style="left:378px;top:727px;width:19px;height:17px;background:#f0f0f0;border:1px solid #fff;border-right-color:#696969;border-bottom-color:#696969;box-shadow:inset -1px -1px 0 #a0a0a0"></div>
<div class="a" style="left:397px;top:727px;width:19px;height:17px;background:#f0f0f0;border:1px solid #fff;border-right-color:#696969;border-bottom-color:#696969;box-shadow:inset -1px -1px 0 #a0a0a0"></div>
<div class="a" style="left:1242px;top:727px;width:18px;height:17px;background:#f0f0f0;border:1px solid #fff;border-right-color:#696969;border-bottom-color:#696969;box-shadow:inset -1px -1px 0 #a0a0a0"></div>
<div class="a" style="left:1260px;top:727px;width:19px;height:17px;background:#f0f0f0;border:1px solid #fff;border-right-color:#696969;border-bottom-color:#696969;box-shadow:inset -1px -1px 0 #a0a0a0"></div>
<div class="a" style="left:1279px;top:137px;width:1px;height:608px;background:#909090"></div>
<svg style="left:383px;top:730px" width="9" height="11" viewBox="0 0 9 11"><path d="M0 0h2v11h-2zM9 0L3 5.500L9 11z" fill="#000"/></svg>
<svg style="left:403px;top:730px" width="6" height="11" viewBox="0 0 6 11"><path d="M6 0L0 5.500L6 11z" fill="#000"/></svg>
<svg style="left:1248px;top:730px" width="6" height="11" viewBox="0 0 6 11"><path d="M0 0L6 5.500L0 11z" fill="#000"/></svg>
<svg style="left:1266px;top:730px" width="9" height="11" viewBox="0 0 9 11"><path d="M7 0h2v11h-2zM0 0L6 5.500L0 11z" fill="#000"/></svg>
<div class="t" style="left:420.4px;top:730px;font-size:11px;letter-spacing:-0.174px;">SQL TOP 1000 Datensatz 1 von 10 gelesenen</div>
<div class="a" style="left:0px;top:751px;width:887px;height:19px;border:1px solid #a0a0a0;border-right-color:#fff;border-bottom:none"></div>
<div class="a" style="left:890px;top:751px;width:38px;height:19px;border:1px solid #a0a0a0;border-right-color:#fff;border-bottom:none"></div>
<div class="a" style="left:931px;top:751px;width:38px;height:19px;border:1px solid #a0a0a0;border-right-color:#fff;border-bottom:none"></div>
<div class="a" style="left:972px;top:751px;width:38px;height:19px;border:1px solid #a0a0a0;border-right-color:#fff;border-bottom:none"></div>
<div class="a" style="left:1013px;top:751px;width:38px;height:19px;border:1px solid #a0a0a0;border-right-color:#fff;border-bottom:none"></div>
<div class="a" style="left:1054px;top:751px;width:206px;height:19px;border:1px solid #a0a0a0;border-right-color:#fff;border-bottom:none"></div>
<div class="a" style="left:0px;top:769px;width:1280px;height:1px;background:#f8f8f8"></div>
<div class="t" style="left:1061.2px;top:755px;font-size:12px;letter-spacing:0.014px;">admin - Moser-Dokumentation.mdb</div>
</body></html>
